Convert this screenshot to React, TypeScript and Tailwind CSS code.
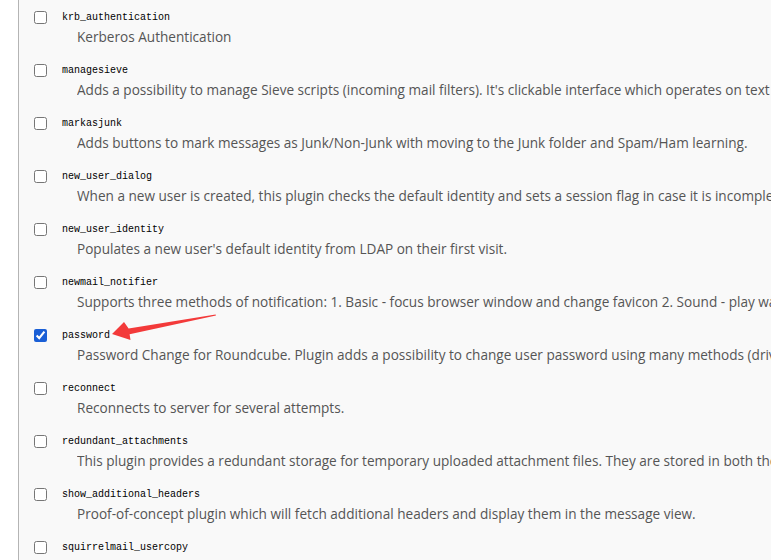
const plugins: { name: string; desc: string; checked?: boolean }[] = [
  { name: 'krb_authentication', desc: 'Kerberos Authentication' },
  {
    name: 'managesieve',
    desc: "Adds a possibility to manage Sieve scripts (incoming mail filters). It's clickable interface which operates on text scripts and parses them to/from internal format.",
  },
  {
    name: 'markasjunk',
    desc: 'Adds buttons to mark messages as Junk/Non-Junk with moving to the Junk folder and Spam/Ham learning.',
  },
  {
    name: 'new_user_dialog',
    desc: 'When a new user is created, this plugin checks the default identity and sets a session flag in case it is incomplete. An overlay box will appear on the screen until the user has reviewed/completed his identity.',
  },
  {
    name: 'new_user_identity',
    desc: "Populates a new user's default identity from LDAP on their first visit.",
  },
  {
    name: 'newmail_notifier',
    desc: 'Supports three methods of notification: 1. Basic - focus browser window and change favicon 2. Sound - play wav file 3. Desktop - display desktop notification',
  },
  {
    name: 'password',
    desc: 'Password Change for Roundcube. Plugin adds a possibility to change user password using many methods (drivers) via Settings/Password tab.',
    checked: true,
  },
  { name: 'reconnect', desc: 'Reconnects to server for several attempts.' },
  {
    name: 'redundant_attachments',
    desc: 'This plugin provides a redundant storage for temporary uploaded attachment files. They are stored in both the database backend and on the local file system.',
  },
  {
    name: 'show_additional_headers',
    desc: 'Proof-of-concept plugin which will fetch additional headers and display them in the message view.',
  },
  {
    name: 'squirrelmail_usercopy',
    desc: 'Copy a new users identity and settings from a nearby Squirrelmail installation',
  },
]

function PluginRow({ name, desc, checked }: { name: string; desc: string; checked?: boolean }) {
  return (
    <div className="h-[53px] pt-[9px]">
      <div className="flex h-[17px] items-center">
        <input
          type="checkbox"
          defaultChecked={checked}
          className="ml-[15px] h-[13px] w-[13px] accent-[#1a5fd6]"
        />
        <span className="ml-[15px] font-['Liberation_Mono',monospace] text-[10px] text-black">
          {name}
        </span>
      </div>
      <div className="ml-[58px] flex h-[22px] items-center overflow-hidden whitespace-nowrap font-['Open_Sans',sans-serif] text-[13.6px] text-[#555]">
        {desc}
      </div>
    </div>
  )
}

export default function App() {
  return (
    <div className="relative flex h-[560px] w-[771px] overflow-hidden bg-white">
      <div className="w-[18px] shrink-0 bg-white" />
      <div className="flex-1 overflow-hidden border-l border-[#b4b4b4] bg-[#f9f9f9]">
        {plugins.map((p) => (
          <PluginRow key={p.name} {...p} />
        ))}
      </div>
      <svg className="absolute left-0 top-0" width="771" height="560" viewBox="0 0 771 560">
        <polygon
          points="112,334 130.5,340 129.6,334.3 216,315.6 215.6,314.4 128.6,328.6 124,322"
          fill="#f33a3a"
        />
      </svg>
    </div>
  )
}
